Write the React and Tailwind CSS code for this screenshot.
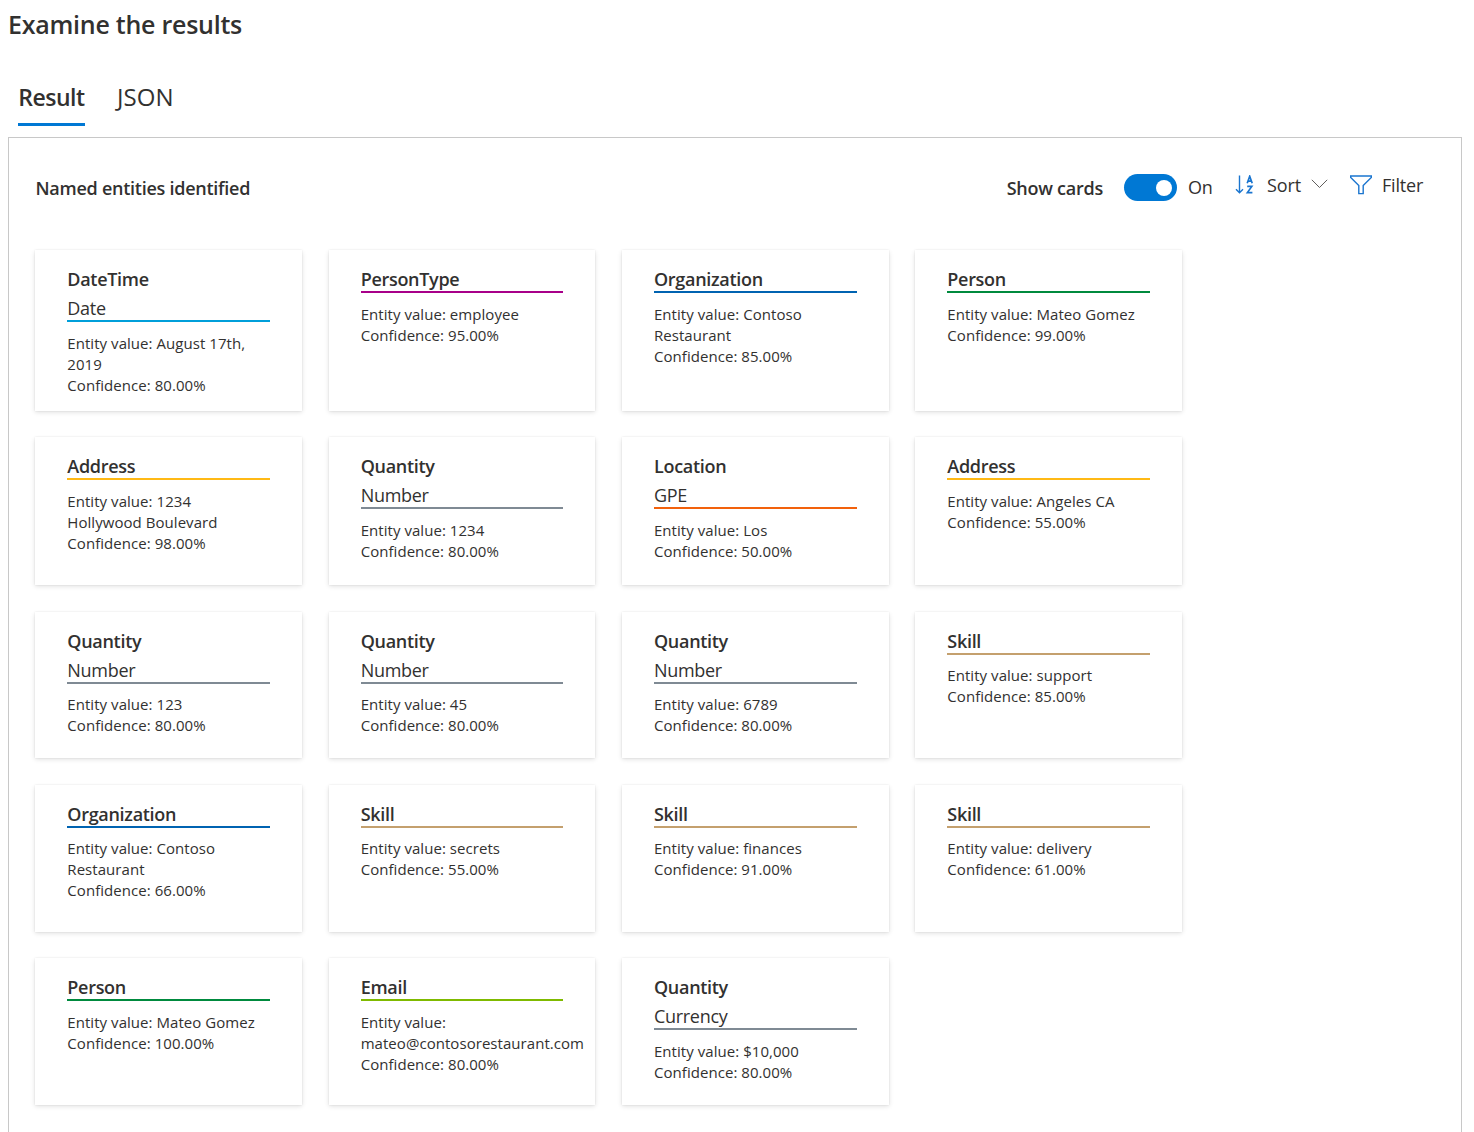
const COLORS = {
  DateTime: "bg-[#009fda]",
  PersonType: "bg-[#a80089]",
  Organization: "bg-[#0063b1]",
  Person: "bg-[#008a3e]",
  Address: "bg-[#ffb915]",
  Quantity: "bg-[#7f8a94]",
  Location: "bg-[#f2610c]",
  Skill: "bg-[#c4a06e]",
  Email: "bg-[#7fba00]",
};

const ENTITIES = [
  { type: "DateTime", sub: "Date", value: "August 17th, 2019", confidence: "80.00%" },
  { type: "PersonType", value: "employee", confidence: "95.00%" },
  { type: "Organization", value: "Contoso Restaurant", confidence: "85.00%" },
  { type: "Person", value: "Mateo Gomez", confidence: "99.00%" },
  { type: "Address", value: "1234 Hollywood Boulevard", confidence: "98.00%" },
  { type: "Quantity", sub: "Number", value: "1234", confidence: "80.00%" },
  { type: "Location", sub: "GPE", value: "Los", confidence: "50.00%" },
  { type: "Address", value: "Angeles CA", confidence: "55.00%" },
  { type: "Quantity", sub: "Number", value: "123", confidence: "80.00%" },
  { type: "Quantity", sub: "Number", value: "45", confidence: "80.00%" },
  { type: "Quantity", sub: "Number", value: "6789", confidence: "80.00%" },
  { type: "Skill", value: "support", confidence: "85.00%" },
  { type: "Organization", value: "Contoso Restaurant", confidence: "66.00%" },
  { type: "Skill", value: "secrets", confidence: "55.00%" },
  { type: "Skill", value: "finances", confidence: "91.00%" },
  { type: "Skill", value: "delivery", confidence: "61.00%" },
  { type: "Person", value: "Mateo Gomez", confidence: "100.00%" },
  { type: "Email", value: "mateo@contosorestaurant.com", confidence: "80.00%" },
  { type: "Quantity", sub: "Currency", value: "$10,000", confidence: "80.00%" },
];

function EntityCard({ type, sub, value, confidence }) {
  return (
    <article className="bg-white px-8 pt-3 shadow-[0_2.13px_4.8px_rgba(0,0,0,0.132),0_0.4px_1.2px_rgba(0,0,0,0.108)]">
      <h3 className="h-[29px] pt-[5px] text-lg leading-6 font-semibold tracking-[-0.3px]">{type}</h3>
      {sub && <p className="h-[29px] pt-[5px] text-lg leading-6 tracking-[-0.3px]">{sub}</p>}
      <div className={`h-0.5 ${COLORS[type]}`} />
      <div className="mt-[10.55px] pr-2 text-[15px] leading-[21px] tracking-[0.05px]">
        <p>{`Entity value: ${value}`}</p>
        <p>{`Confidence: ${confidence}`}</p>
      </div>
    </article>
  );
}

function SortIcon() {
  return (
    <svg width="19" height="20" viewBox="0 0 19 20" fill="none" stroke="#1a75cf">
      <path strokeWidth="1.4" d="M4.5 0.5V17.5M1 14.3L4.5 17.8L8 14.3" />
      <path strokeWidth="1.7" d="M12.2 8.3L14.7 1.3L17.2 8.3M13 6.2H16.4M12.2 11.4H16.8L12.4 17.6H17.4" />
    </svg>
  );
}

function FilterIcon() {
  return (
    <svg width="22" height="20" viewBox="0 0 22 20" fill="none" stroke="#1a75cf" strokeWidth="1.4">
      <path d="M0.7 1H21.3V2.4L13.2 10.6V18.6H8.8V10.6L0.7 2.4Z" />
    </svg>
  );
}

export default function App() {
  return (
    <div className="flex h-[1132px] w-[1474px] flex-col overflow-hidden bg-white pt-2 pr-3 pl-2 font-['Open_Sans',sans-serif] text-[#323130]">
      <h1 className="h-8 shrink-0 text-[25px] leading-8 font-semibold tracking-[-0.25px]">Examine the results</h1>

      <nav className="mt-[41px] ml-2.5 flex h-[45px] shrink-0 gap-8 leading-8">
        <button className="flex w-[67px] flex-col border-b-3 border-[#0078d4] text-[23px] font-semibold tracking-[-0.5px]">
          Result
        </button>
        <button className="flex flex-col text-2xl leading-8 tracking-[0.1px]">JSON</button>
      </nav>

      <section className="mt-[11px] h-[1100px] shrink-0 border border-[#c8c8c8]">
        <header className="flex h-28 items-start pr-[38px] pl-[26.5px] text-lg leading-6">
          <h2 className="mt-[38px] font-semibold tracking-[-0.26px]">Named entities identified</h2>
          <span className="mt-[38px] ml-auto font-semibold tracking-[-0.25px]">Show cards</span>
          <button className="mt-9 ml-[21px] flex h-[27px] w-[53px] items-center justify-end rounded-full bg-[#0078d4] pr-[5px]">
            <span className="size-4 rounded-full bg-white" />
          </button>
          <span className="mt-[37px] ml-[11px] w-[25px] tracking-[-0.3px]">On</span>
          <button className="mt-[35px] ml-[22px] flex">
            <span className="mt-0.5"><SortIcon /></span>
            <span className="ml-[13px] w-[34px] tracking-[-0.1px]">Sort</span>
            <svg className="mt-1.5 ml-2.5" width="17" height="10" viewBox="0 0 17 10" fill="none" stroke="#605e5c">
              <path d="M0.8 0.8L8.5 8.5L16.2 0.8" />
            </svg>
          </button>
          <button className="mt-[35px] ml-[22px] flex">
            <span className="mt-0.5"><FilterIcon /></span>
            <span className="ml-2.5 w-[41px] tracking-[-0.2px]">Filter</span>
          </button>
        </header>

        <div className="ml-[26.33px] grid w-[1146.67px] grid-cols-4 grid-rows-[160.67px_147.55px_146.6px_146.75px_146.75px] gap-[26.67px]">
          {ENTITIES.map((entity, i) => (
            <EntityCard key={i} {...entity} />
          ))}
        </div>
      </section>
    </div>
  );
}
